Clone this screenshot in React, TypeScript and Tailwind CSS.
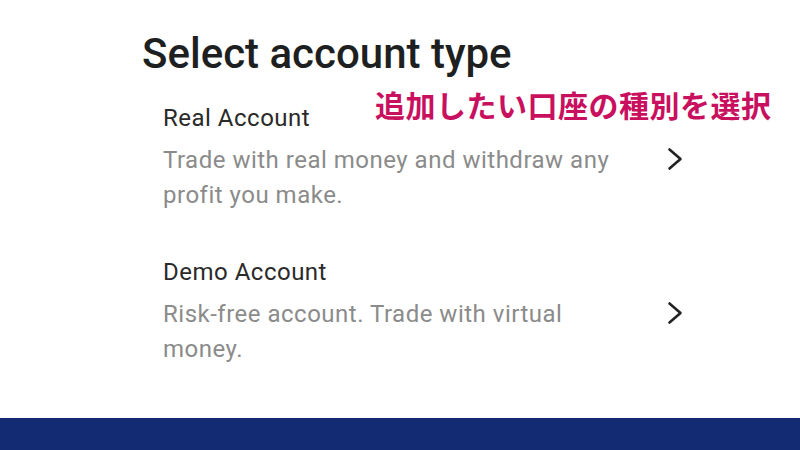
import React from 'react';

const ACCOUNT_TYPES = [
  {
    title: 'Real Account',
    description: 'Trade with real money and withdraw any profit you make.',
  },
  {
    title: 'Demo Account',
    description: 'Risk-free account. Trade with virtual money.',
  },
];

const Chevron = () => (
  <svg width="16" height="24" viewBox="0 0 16 24" fill="none" className="shrink-0">
    <polyline
      points="2.5,2.5 13.5,12 2.5,21.5"
      stroke="#222222"
      strokeWidth="2.6"
      strokeLinecap="round"
      strokeLinejoin="round"
    />
  </svg>
);

export default function App() {
  return (
    <div className="relative flex h-[450px] w-[800px] flex-col overflow-hidden bg-white font-['Roboto',_'Liberation_Sans',_sans-serif]">
      <div className="flex-1 pl-[142px] pt-[33px]">
        <h1 className="text-[42px] leading-[42px] font-medium text-[#1e1f21]">
          Select account type
        </h1>

        <div className="mt-[29px] flex flex-col gap-[45px] pl-[21px]">
          {ACCOUNT_TYPES.map((item) => (
            <div key={item.title} className="flex items-center">
              <div className="w-[465px] tracking-[0.5px]">
                <div className="text-[24px] leading-[28px] text-[#2a2a2a]">
                  {item.title}
                </div>
                <p className="mt-[11px] text-[24px] leading-[35px] text-[#8b8b8b]">
                  {item.description}
                </p>
              </div>
              <div className="ml-[39px]">
                <Chevron />
              </div>
            </div>
          ))}
        </div>
      </div>

      <div className="h-[32px] bg-[#132b72]" />

      {/* annotation */}
      <div className="absolute left-[375px] top-[89px] text-[30px] leading-none font-bold tracking-[0.5px] text-[#c9105f] font-['Noto_Sans_CJK_JP',_sans-serif]">
        追加したい口座の種別を選択
      </div>
    </div>
  );
}
